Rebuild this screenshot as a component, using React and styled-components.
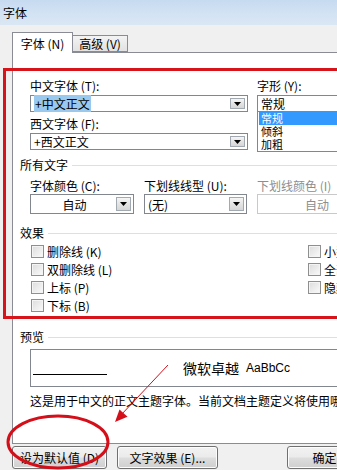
import React from 'react';
import styled, { createGlobalStyle } from 'styled-components';

const GlobalStyle = createGlobalStyle`
  html, body {
    margin: 0;
    padding: 0;
    background: #f0f0f0;
  }
  body {
    font-family: "Noto Sans CJK SC", "Liberation Sans", sans-serif;
    font-size: 12px;
    color: #000;
  }
`;

const Window = styled.div`
  position: relative;
  width: 337px;
  height: 470px;
  overflow: hidden;
  background: #f0f0f0;
`;

const TitleBar = styled.div`
  height: 25px;
  display: flex;
  align-items: center;
  padding-left: 3px;
  background: linear-gradient(180deg, #c6daf0 0%, #d3e3f4 55%, #dae6f3 100%);
  font-size: 12px;
  line-height: 14px;
`;

const Client = styled.div`
  width: 430px;
  padding: 7px 0 0 12px;
`;

const Tabs = styled.div`
  display: flex;
  align-items: flex-end;
  height: 21px;
  margin-bottom: -1px;
  position: relative;
  z-index: 1;
`;

const Tab = styled.div`
  box-sizing: border-box;
  display: flex;
  align-items: center;
  justify-content: center;
  width: ${p => p.$w}px;
  height: ${p => (p.$active ? 21 : 17)}px;
  margin-bottom: ${p => (p.$active ? 0 : 1)}px;
  border: 1px solid #898c95;
  border-bottom: ${p => (p.$active ? 'none' : '1px solid #898c95')};
  border-left: ${p => (p.$active ? '1px solid #898c95' : 'none')};
  background: ${p => (p.$active ? '#fff' : 'linear-gradient(180deg, #f3f3f3, #e2e2e2)')};
  font-size: 12px;
  line-height: 14px;
  padding-top: ${p => (p.$active ? 1 : 0)}px;
`;

const Panel = styled.div`
  box-sizing: border-box;
  height: 392px;
  border: 1px solid #898c95;
  border-right: none;
  background: #fff;
  padding: 26px 0 0 7px;
`;

const Label = styled.div`
  height: 14px;
  line-height: 14px;
  font-size: 12px;
  color: ${p => (p.$disabled ? '#8d8d8d' : '#000')};
  margin-bottom: ${p => p.$mb ?? 2}px;
  white-space: nowrap;
`;

const FontGrid = styled.div`
  display: grid;
  grid-template-columns: 218px 130px;
  column-gap: 9px;
  margin-left: 10px;
`;

const Column = styled.div`
  display: flex;
  flex-direction: column;
  min-width: 0;
`;

const Box = styled.div`
  box-sizing: border-box;
  display: flex;
  align-items: center;
  height: ${p => p.$h}px;
  border: 1px solid ${p => (p.$disabled ? '#c9c9c9' : '#82878f')};
  background: #fff;
  padding: 0 2px 0 2px;
  margin-bottom: ${p => p.$mb ?? 0}px;
`;

const Value = styled.span`
  flex: 1;
  line-height: 13px;
  font-size: 12px;
  white-space: nowrap;
  text-align: ${p => p.$align || 'left'};
  color: ${p => (p.$disabled ? '#8d8d8d' : '#000')};
  padding-left: ${p => (p.$align === 'center' ? 0 : 1)}px;
`;

const Selected = styled.span`
  background: #99c9ef;
  padding: 0 1px;
`;

const ArrowButton = styled.div`
  box-sizing: border-box;
  flex-shrink: 0;
  width: 15px;
  height: ${p => p.$h}px;
  display: flex;
  align-items: center;
  justify-content: center;
  border: 1px solid #a3a9b1;
  background: linear-gradient(180deg, #f6f6f6 0%, #e4e4e4 50%, #d6d6d6 100%);
`;

const ListBox = styled.div`
  box-sizing: border-box;
  height: 40px;
  border: 1px solid #82878f;
  border-top: none;
  padding: 0 1px;
  display: flex;
  flex-direction: column;
`;

const ListItem = styled.div`
  height: 13px;
  line-height: 13px;
  font-size: 11px;
  padding-left: 2px;
  background: ${p => (p.$selected ? '#3399ff' : 'transparent')};
  color: ${p => (p.$selected ? '#fff' : '#000')};
`;

const GroupHeader = styled.div`
  display: flex;
  align-items: center;
  gap: 4px;
  height: 14px;
  line-height: 14px;
  margin-top: ${p => p.$mt}px;
  margin-bottom: ${p => p.$mb ?? 0}px;
  &::after {
    content: '';
    flex: 1;
    height: 1px;
    background: #dcdfe3;
    margin-top: 1px;
  }
`;

const ColorGrid = styled.div`
  display: grid;
  grid-template-columns: 104px 103px 120px;
  column-gap: 10px;
  margin-left: 10px;
`;

const EffectsGrid = styled.div`
  display: grid;
  grid-template-columns: 277px 120px;
  margin-left: 11px;
`;

const CheckRow = styled.div`
  display: flex;
  align-items: center;
  gap: 3px;
  height: 18px;
  white-space: nowrap;
`;

const CheckBox = styled.span`
  box-sizing: border-box;
  flex-shrink: 0;
  width: 13px;
  height: 13px;
  border: 1px solid #8e8f8f;
  background: linear-gradient(135deg, #dcdcdc 0%, #eeeeee 60%, #fafafa 100%);
  box-shadow: inset 0 0 0 1px #f4f4f4;
`;

const PreviewBox = styled.div`
  box-sizing: border-box;
  display: flex;
  align-items: center;
  height: 38px;
  margin: 5px 0 0 10px;
  border: 1px solid #82878f;
  padding-left: 2px;
`;

const Rule = styled.div`
  align-self: flex-start;
  margin-top: 24px;
  width: 74px;
  height: 1px;
  background: #000;
`;

const SampleCn = styled.span`
  margin-left: 76px;
  font-size: 14px;
  line-height: 16px;
`;

const SampleEn = styled.span`
  margin-left: 7px;
  font-family: "Liberation Sans", sans-serif;
  font-size: 12px;
  line-height: 16px;
`;

const Description = styled.div`
  margin: 7px 0 0 10px;
  height: 14px;
  line-height: 14px;
  white-space: nowrap;
`;

const ButtonRow = styled.div`
  display: flex;
  margin-top: 2px;
`;

const Button = styled.div`
  box-sizing: border-box;
  flex-shrink: 0;
  display: flex;
  align-items: center;
  justify-content: center;
  width: ${p => p.$w}px;
  height: 23px;
  margin-left: ${p => p.$ml ?? 0}px;
  border: 1px solid #707070;
  border-radius: 3px;
  background: linear-gradient(180deg, #f2f2f2 0%, #ebebeb 48%, #dddddd 52%, #cfcfcf 100%);
  box-shadow: inset 0 0 0 1px #fcfcfc;
  font-size: 12px;
  line-height: 14px;
  white-space: nowrap;
`;

const Annotations = styled.svg`
  position: absolute;
  left: 0;
  top: 0;
  pointer-events: none;
`;

const Triangle = () => (
  <svg width="7" height="4" viewBox="0 0 7 4">
    <path d="M0 0h7L3.5 4z" fill="#000" />
  </svg>
);

const Combo = ({ value, h = 17, align, disabled, arrow = true, mb, children }) => (
  <Box $h={h} $disabled={disabled} $mb={mb}>
    <Value $align={align} $disabled={disabled}>{children || value}</Value>
    {arrow && (
      <ArrowButton $h={h === 17 ? 11 : 14}>
        <Triangle />
      </ArrowButton>
    )}
  </Box>
);

const Check = ({ text }) => (
  <CheckRow>
    <CheckBox />
    <span>{text}</span>
  </CheckRow>
);

const App = () => (
  <Window>
    <GlobalStyle />
    <TitleBar>字体</TitleBar>
    <Client>
      <Tabs>
        <Tab $active $w={61}>字体 (N)</Tab>
        <Tab $w={55}>高级 (V)</Tab>
      </Tabs>
      <Panel>
        <FontGrid>
          <Column>
            <Label>中文字体 (T):</Label>
            <Combo mb={5}><Selected>+中文正文</Selected></Combo>
            <Label>西文字体 (F):</Label>
            <Combo value="+西文正文" />
          </Column>
          <Column>
            <Label>字形 (Y):</Label>
            <Combo value="常规" arrow={false} />
            <ListBox>
              <ListItem $selected>常规</ListItem>
              <ListItem>倾斜</ListItem>
              <ListItem>加粗</ListItem>
            </ListBox>
          </Column>
        </FontGrid>

        <GroupHeader $mt={6} $mb={7}>所有文字</GroupHeader>
        <ColorGrid>
          <Column>
            <Label $mb={1}>字体颜色 (C):</Label>
            <Combo h={20} value="自动" align="center" />
          </Column>
          <Column>
            <Label $mb={1}>下划线线型 (U):</Label>
            <Combo h={20} value="(无)" />
          </Column>
          <Column>
            <Label $mb={1} $disabled>下划线颜色 (I)</Label>
            <Combo h={20} value="自动" align="center" disabled arrow={false} />
          </Column>
        </ColorGrid>

        <GroupHeader $mt={12} $mb={2}>效果</GroupHeader>
        <EffectsGrid>
          <Column>
            <Check text="删除线 (K)" />
            <Check text="双删除线 (L)" />
            <Check text="上标 (P)" />
            <Check text="下标 (B)" />
          </Column>
          <Column>
            <Check text="小型大写字母 (M)" />
            <Check text="全部大写字母 (A)" />
            <Check text="隐藏 (H)" />
          </Column>
        </EffectsGrid>

        <GroupHeader $mt={16}>预览</GroupHeader>
        <PreviewBox>
          <Rule />
          <SampleCn>微软卓越</SampleCn>
          <SampleEn>AaBbCc</SampleEn>
        </PreviewBox>
        <Description>这是用于中文的正文主题字体。当前文档主题定义将使用哪种字体。</Description>
      </Panel>
      <ButtonRow>
        <Button $w={95}>设为默认值 (D)</Button>
        <Button $w={101} $ml={10}>文字效果 (E)...</Button>
        <Button $w={75} $ml={69}>确定</Button>
      </ButtonRow>
    </Client>

    <Annotations width="337" height="470" viewBox="0 0 337 470">
      <rect x="4.5" y="69.5" width="345" height="248" fill="none" stroke="#d7141a" strokeWidth="3" />
      <ellipse cx="58" cy="442" rx="50" ry="26" fill="none" stroke="#d40f1a" strokeWidth="3" />
      <line x1="168" y1="365" x2="121" y2="415" stroke="#d40f1a" strokeWidth="1" />
      <path d="M115 422L119.5 409.5L127.5 416.8Z" fill="#d40f1a" />
    </Annotations>
  </Window>
);

export default App;
